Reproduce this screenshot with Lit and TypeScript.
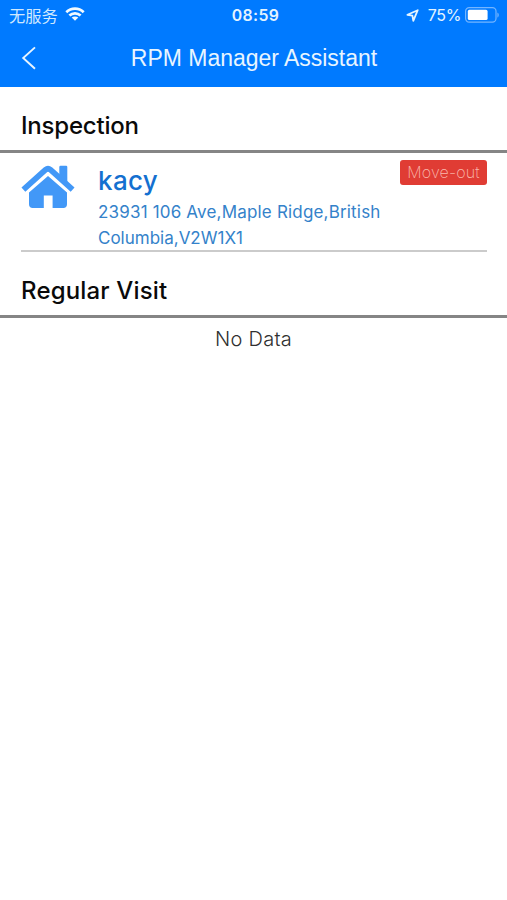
import { LitElement, html, css } from "lit";
import { customElement } from "lit/decorators.js";

@customElement("status-bar")
class StatusBar extends LitElement {
  static styles = css`
    :host { display: grid; grid-template-columns: 1fr auto 1fr; align-items: center; height: 30px; padding: 0 8px 0 9px; color: #e4f4ff; font-family: Inter, "Noto Sans CJK SC", sans-serif; font-size: 16px; }
    .side { display: flex; align-items: center; }
    .right { justify-content: flex-end; }
    .carrier { font-family: "Noto Sans CJK SC", sans-serif; font-size: 16.3px; line-height: 30px; font-weight: 400; margin-top: -1px; color: #cfe8ff; }
    .wifi { margin-left: 7px; margin-top: -2px; }
    .time { font-weight: 600; font-size: 15.8px; letter-spacing: 0.35px; padding-left: 3px; }
    .percent { margin: 0 4px 0 9px; letter-spacing: -0.4px; }
    .battery { margin-top: -1px; }
    svg { display: block; }
  `;
  render() {
    return html`
      <div class="side">
        <span class="carrier">无服务</span>
        <svg class="wifi" width="20" height="14" viewBox="0 0 20 14" fill="none" stroke="#f2faff" stroke-width="2.7">
          <path d="M1.3 5.2C6.2.5 13.8.5 18.7 5.2" />
          <path d="M4.4 8.6c3.2-3 8-3 11.2 0" />
          <path d="M10 13.8 6.7 10.6c1.8-1.6 4.8-1.6 6.6 0Z" fill="#f2faff" stroke="none" />
        </svg>
      </div>
      <span class="time">08:59</span>
      <div class="side right">
        <svg width="13" height="13" viewBox="0 0 13 13" fill="none" stroke="#e4f4ff" stroke-width="1.8" stroke-linejoin="round">
          <path d="M11.7 1.2 1.4 5.8l5 .8.9 5.2Z" />
        </svg>
        <span class="percent">75%</span>
        <svg class="battery" width="34" height="16" viewBox="0 0 34 16">
          <rect x=".6" y=".6" width="30.4" height="14.6" rx="3.6" fill="none" stroke="#74b5ff" stroke-width="1.2" />
          <rect x="2.8" y="2.8" width="19.8" height="10.2" rx="1.6" fill="#fff" />
          <path d="M32.4 5.4c1.8.8 1.8 4.4 0 5.2Z" fill="#74b5ff" />
        </svg>
      </div>
    `;
  }
}

@customElement("nav-bar")
class NavBar extends LitElement {
  static styles = css`
    :host { display: grid; grid-template-columns: 50px 1fr 50px; align-items: center; height: 57px; color: #e8f5ff; }
    .back { display: block; margin-left: 21px; margin-top: -1px; }
    .title { text-align: center; font: 400 23px/30px "Liberation Sans", Arial, sans-serif; letter-spacing: -0.02px; white-space: nowrap; margin-top: -2px; padding-left: 1px; }
  `;
  render() {
    return html`
      <svg class="back" width="16" height="24" viewBox="0 0 16 24" fill="none" stroke="#e8f5ff" stroke-width="1.9">
        <path d="M14 1.4 2.2 12 14 22.8" />
      </svg>
      <div class="title">RPM Manager Assistant</div>
    `;
  }
}

@customElement("app-root")
class AppRoot extends LitElement {
  static styles = css`
    :host { display: block; min-height: 900px; background: #fff; font-family: Inter, "Liberation Sans", sans-serif; }
    .top { background: #007aff; height: 87px; }
    .heading { box-sizing: border-box; height: 66px; margin: 0; padding: 24px 0 0 21px; font-size: 24px; font-weight: 500; line-height: 30px; color: #0a0a0a; border-bottom: 3px solid #858585; }
    .inspection { letter-spacing: -0.2px; }
    .visit { letter-spacing: 0.16px; }
    .item { box-sizing: border-box; height: 99px; margin: 0 20px 0 21px; padding-top: 7px; display: flex; align-items: flex-start; border-bottom: 2px solid #cbcbcb; }
    .house { flex: none; margin-top: 5px; }
    .info { flex: 1; margin-left: 23px; white-space: nowrap; }
    .name { font-size: 26px; font-weight: 500; line-height: 30px; letter-spacing: 0.35px; margin-top: 6px; color: #1470d0; }
    .address { font-size: 17px; font-weight: 400; line-height: 25.5px; margin-top: 4px; color: #3482ca; }
    .line { display: block; }
    .street { letter-spacing: 0.18px; }
    .badge { flex: none; box-sizing: border-box; width: 87px; height: 25px; border-radius: 3px; background: #e03c34; color: #f9b9ae; font-size: 16px; font-weight: 200; line-height: 25px; letter-spacing: 0.15px; text-align: center; }
    .empty { margin-top: 7px; text-align: center; font-size: 20px; font-weight: 300; line-height: 28px; letter-spacing: 0.3px; color: #303030; }
  `;
  render() {
    return html`
      <div class="top"><status-bar></status-bar><nav-bar></nav-bar></div>
      <h2 class="heading inspection">Inspection</h2>
      <div class="item">
        <svg class="house" width="54" height="44" viewBox="0 0 54 44" fill="#4298f7">
          <path d="M38.3 12V2q0-1.2 1.2-1.2h5.6q1.2 0 1.2 1.2v17Z" />
          <path d="M2.4 24.6 24.6 4.7q2.4-2 4.8 0l22.2 19.9" fill="none" stroke="#4298f7" stroke-width="5.8" />
          <path d="M27 11 46 27.6V39.3q0 3.7-3.7 3.7H31.6V30.5h-8.8V43H11.7Q8 43 8 39.3V27.6Z" />
        </svg>
        <div class="info">
          <div class="name">kacy</div>
          <div class="address">
            <span class="line street">23931 106 Ave,Maple Ridge,British</span>
            <span class="line">Columbia,V2W1X1</span>
          </div>
        </div>
        <div class="badge">Move-out</div>
      </div>
      <h2 class="heading visit">Regular Visit</h2>
      <div class="empty">No Data</div>
    `;
  }
}
